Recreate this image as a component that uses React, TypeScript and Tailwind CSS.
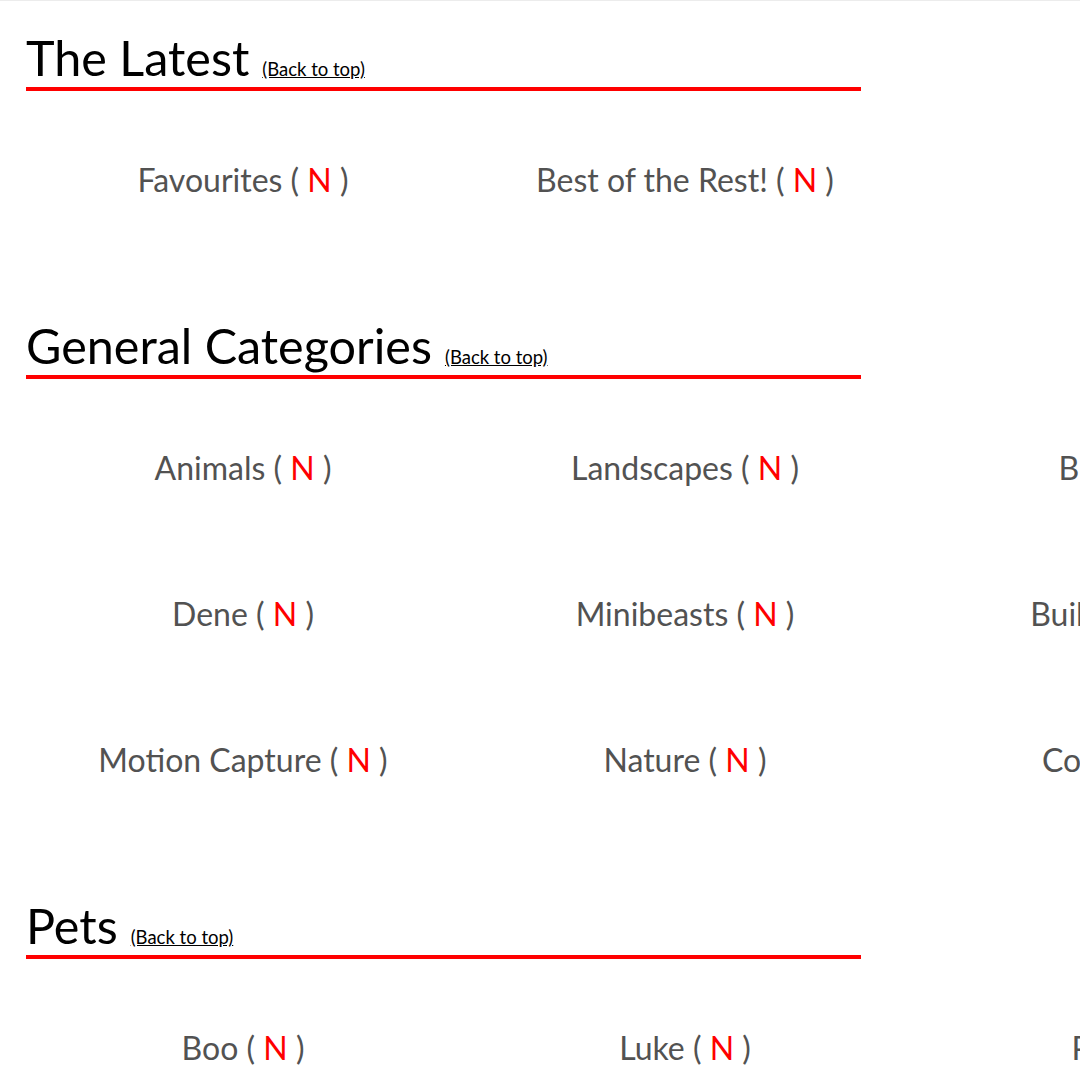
import React from "react";

type Section = {
  title: string;
  items: string[];
};

const sections: Section[] = [
  { title: "The Latest", items: ["Favourites", "Best of the Rest!"] },
  {
    title: "General Categories",
    items: ["Animals", "Landscapes", "Birds", "Dene", "Minibeasts", "Buildings", "Motion Capture", "Nature", "Coastal"],
  },
  { title: "Pets", items: ["Boo", "Luke", "Pip"] },
];

function Heading({ title }: { title: string }) {
  return (
    <div>
      <div className="flex items-baseline pl-[26px] h-[56px]">
        <h2 className="text-[48.5px] leading-[56px] font-normal text-black">{title}</h2>
        <a href="#top" className="ml-[13px] text-[18.5px] text-black underline">
          (Back to top)
        </a>
      </div>
      <div className="mt-[2px] ml-[26px] w-[835px] h-[4px] bg-[#ff0000]" />
    </div>
  );
}

function Category({ name }: { name: string }) {
  return (
    <div className="h-[146px] flex items-center justify-center">
      <a href="#" className="text-[32px] text-[#525252] whitespace-nowrap">
        {name} ( <span className="text-[#ff0000]">N</span> )
      </a>
    </div>
  );
}

export default function App() {
  return (
    <div
      id="top"
      className="w-[1080px] h-[1080px] overflow-hidden bg-white border-t border-[#ececec] pt-[28px]"
      style={{ fontFamily: "Lato, 'Noto Sans', sans-serif" }}
    >
      {sections.map((s, i) => (
        <section key={s.title} className={i > 0 ? "mt-[64px]" : ""}>
          <Heading title={s.title} />
          <div className="mt-[16px] ml-[22px] grid grid-cols-[442px_442px_442px] w-[1326px]">
            {s.items.map((item) => (
              <Category key={item} name={item} />
            ))}
          </div>
        </section>
      ))}
    </div>
  );
}
